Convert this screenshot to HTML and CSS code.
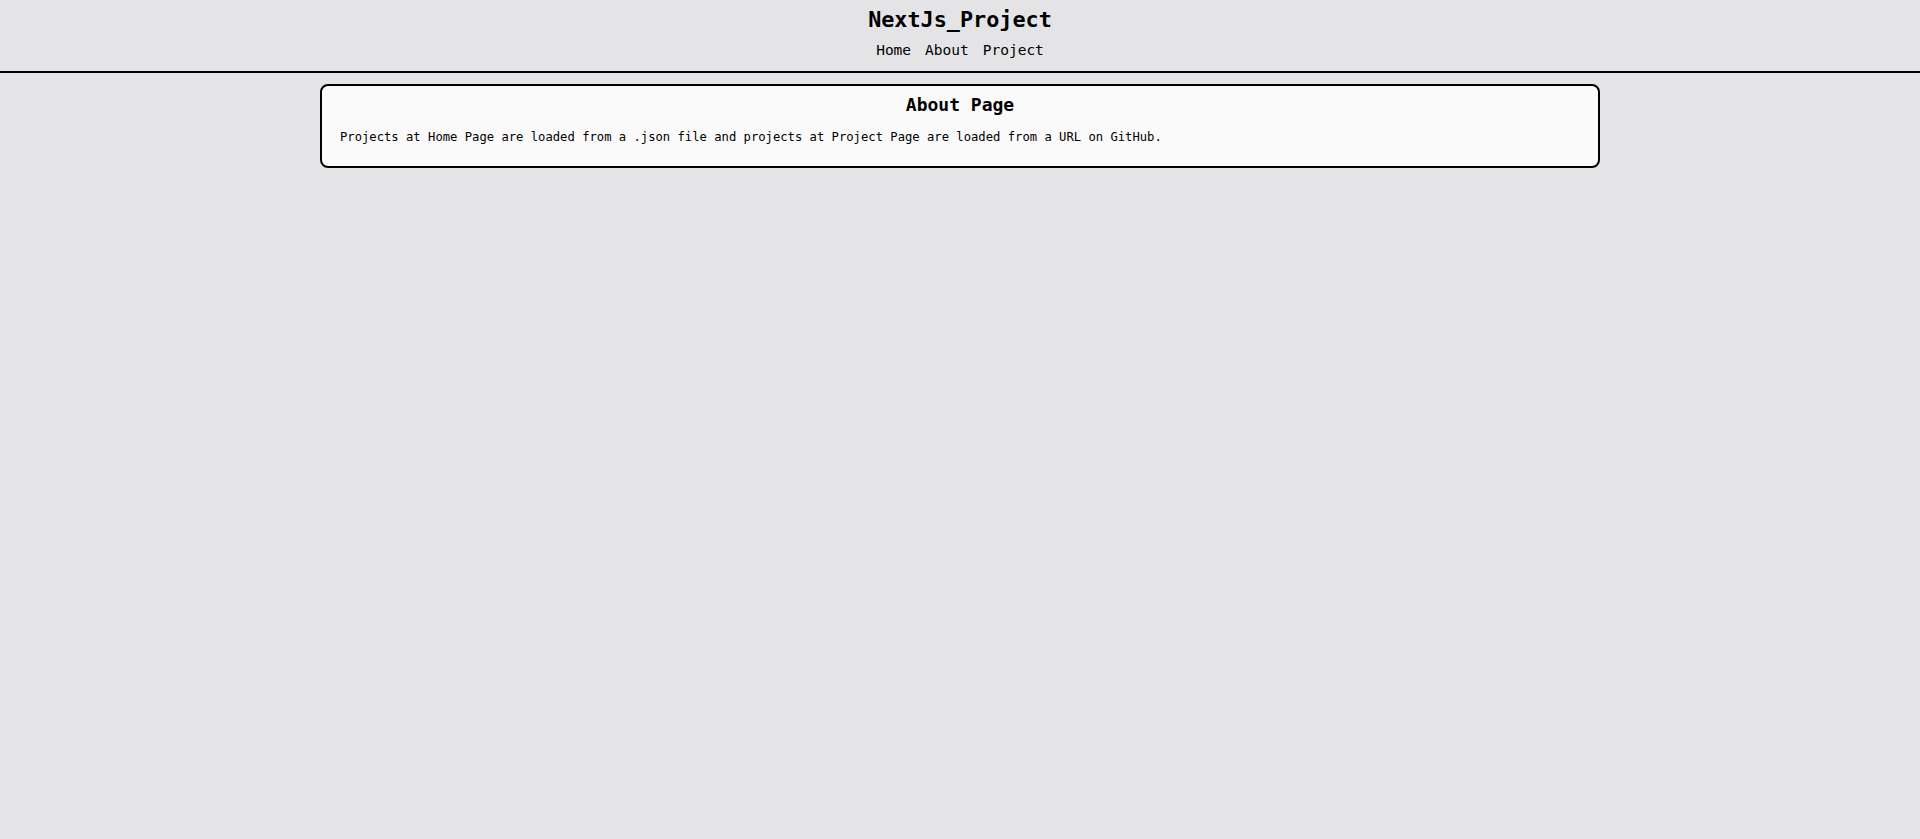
FILE: index.html
```html
<!DOCTYPE html>
<html lang="en">
<head>
<meta charset="utf-8">
<title>NextJs_Project</title>
<link rel="stylesheet" href="styles.css">
</head>
<body>
<header class="site-header">
  <h1 class="site-title">NextJs_Project</h1>
  <nav class="site-nav">
    <a href="#" class="nav-link">Home</a>
    <a href="#" class="nav-link">About</a>
    <a href="#" class="nav-link">Project</a>
  </nav>
</header>
<main class="content">
  <section class="card">
    <h2 class="card-title">About Page</h2>
    <p class="card-text">Projects at Home Page are loaded from a .json file and projects at Project Page are loaded from a URL on GitHub.</p>
  </section>
</main>
</body>
</html>
```

FILE: styles.css
```css
* { box-sizing: border-box; }
html, body {
  margin: 0;
  padding: 0;
  background: #e4e4e7;
  color: #000;
  font-family: "DejaVu Sans Mono", "Liberation Mono", monospace;
}
body { min-height: 839px; }
.site-header {
  display: flex;
  flex-direction: column;
  align-items: center;
  padding: 6px 0 11px;
  border-bottom: 2px solid #000;
}
.site-title {
  margin: 0;
  font-size: 21.8px;
  line-height: 28px;
  font-weight: 700;
}
.site-nav {
  display: flex;
  gap: 6px;
  margin-top: 6px;
}
.nav-link {
  color: #000;
  text-decoration: none;
  font-size: 14.5px;
  line-height: 20px;
  padding: 0 4px;
}
.content {
  display: flex;
  justify-content: center;
  padding-top: 11px;
}
.card {
  width: 1280px;
  background: #fafafa;
  border: 2px solid #000;
  border-radius: 8px;
  padding: 7px 18px 21px;
}
.card-title {
  margin: 0;
  text-align: center;
  font-size: 18px;
  line-height: 24px;
  font-weight: 700;
}
.card-text {
  margin: 12px 0 0;
  font-size: 12.2px;
  line-height: 16px;
}
```
